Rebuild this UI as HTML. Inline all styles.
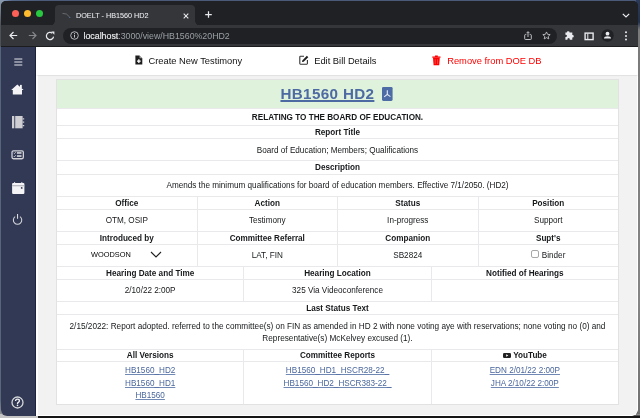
<!DOCTYPE html>
<html><head><meta charset="utf-8">
<style>
*{box-sizing:border-box;margin:0;padding:0}
html,body{width:640px;height:418px;overflow:hidden;background:#1b1b1d;font-family:"Liberation Sans",sans-serif}
#bgtop{position:absolute;left:0;top:0;width:640px;height:8px;background:linear-gradient(90deg,#9ab0cc 0,#55678a 12px,#4a5a78 40px,#4a5a78 100%)}
#bgl{position:absolute;left:0;top:0;width:4px;height:418px;background:linear-gradient(180deg,#8a9ab0 0,#50535a 24px,#4d5058 46px,#56647a 47px,#5a667a 400px,#9a9a9a 418px)}
#bgr{position:absolute;right:0;top:0;width:4px;height:418px;background:linear-gradient(180deg,#2a3a58 0,#22324e 22px,#7a7a7a 30px,#858585 300px,#707070 418px)}
#bgb{position:absolute;left:0;bottom:0;width:640px;height:4px;background:linear-gradient(180deg,#aaa 0,#555 1.5px,#151515 2.5px)}
#win{will-change:transform;position:absolute;left:1px;top:1px;width:637px;height:415px;border-radius:5px 5px 6px 6px;overflow:hidden;background:#202124}
#tabbar{position:absolute;left:0;top:0;width:637px;height:24px;background:#202124}
.dot{position:absolute;top:8.6px;width:7.1px;height:7.1px;border-radius:50%}
#tab{position:absolute;left:54px;top:4px;width:140px;height:21px;background:#35363a;border-radius:4px 4px 0 0}
#tab:before,#tab:after{content:"";position:absolute;bottom:0;width:5px;height:5px;background:radial-gradient(circle at 0 0,transparent 4.5px,#35363a 5px)}
#tab:before{left:-5px;background:radial-gradient(circle at 0 0,transparent 4.5px,#35363a 5px)}
#tab:after{right:-5px;background:radial-gradient(circle at 100% 0,transparent 4.5px,#35363a 5px)}
#tabtitle{position:absolute;left:20.6px;top:5.6px;font-size:8px;color:#eceef0;-webkit-text-stroke:0.05px #eceef0;white-space:nowrap;transform:scaleX(0.905);transform-origin:0 0}
#toolbar{position:absolute;left:0;top:24px;width:637px;height:21px;background:#35363a}
#omni{position:absolute;left:62px;top:2.8px;width:494px;height:16px;border-radius:8px;background:#202124}
#url{position:absolute;left:20.5px;top:3.2px;font-size:8.8px;color:#9aa0a6;white-space:nowrap}
#url b{font-weight:normal;color:#eceef0;-webkit-text-stroke:0.15px #eceef0}
.ic{position:absolute;overflow:visible}
#sep{position:absolute;left:0;top:45px;width:637px;height:1px;background:#1c1c1e}
#content{position:absolute;left:0;top:45.5px;width:637px;height:369.5px;background:#f2f2f2;border-right:1.4px solid #fff;border-bottom:1.5px solid #fff;border-radius:0 0 6px 0}
#side{position:absolute;left:0;top:0;width:35.2px;height:370px;background:#313954;border-right:1px solid #1c2340}
#nav{position:absolute;left:35px;top:0;width:602px;height:28.6px;background:#fff;box-shadow:0 0.6px 1.4px rgba(0,0,0,0.22)}
.navi{position:absolute;top:9px;font-size:9.33px;color:#111;white-space:nowrap}
#card{position:absolute;left:55px;top:78px;width:563px;height:326px;border:1px solid #e2e2e2;background:#fff}
.row{position:absolute;left:0;width:561px;display:flex}
.green{background:#dff3dc}
.c{flex:1;display:flex;align-items:center;justify-content:center;text-align:center;font-size:8.17px;color:#16181a;border-left:1px solid #e9e9ec;white-space:nowrap}
.c:first-child{border-left:none}
.hl{position:absolute;left:0;width:561px;height:1px;background:#e9e9ec}
.h{font-weight:bold}
a{color:#4a669c;text-decoration:underline;text-decoration-thickness:0.8px;text-decoration-color:#7088b4;text-underline-offset:1px}
.title{text-decoration-color:#4d6aa2;color:#4d6aa2;font-size:15.2px;letter-spacing:0.36px;font-weight:bold;text-decoration-thickness:1.6px;text-underline-offset:1px;position:relative;top:-0.5px}
.pdf{display:inline-block;width:10.6px;height:13.9px;margin-left:7.6px;margin-right:2px;vertical-align:-1px;position:relative;top:0.2px}
.st{white-space:normal;line-height:12.4px;font-size:8.22px;padding-top:2.3px}
.lk{flex-direction:column;justify-content:flex-start;padding-top:3.3px;line-height:12.4px}
.lk a{display:block}
.sel{display:inline-flex;align-items:center;color:#000;position:relative;top:-0.8px}
.wd{display:inline-block;font-size:8px;transform:scaleX(0.925);transform-origin:0 50%;margin-right:-3.2px}
.chev{margin-left:19px}
.cb{display:inline-block;width:8.2px;height:8.2px;border:1px solid #a8a8a8;border-radius:2px;margin-right:2.5px;position:relative;top:-1.8px}
.yt{display:inline-block;width:8px;height:5px;margin-right:2.5px;vertical-align:0.5px}
</style></head><body>
<div id="bgtop"></div><div id="bgl"></div><div id="bgr"></div><div id="bgb"></div><div style="position:absolute;left:0;bottom:0;width:38px;height:4px;background:#c4c4c4"></div>
<div id="win">
  <div id="tabbar">
    <div class="dot" style="left:11.1px;background:#fe5f57"></div>
    <div class="dot" style="left:23px;background:#febc2e"></div>
    <div class="dot" style="left:35px;background:#28c840"></div>
    <div id="tab">
      <svg class="ic" style="left:7px;top:7px" width="10" height="7" viewBox="0 0 10 7"><path d="M0.5 1.4 Q4.8 0.9 7.6 5" fill="none" stroke="#75777b" stroke-width="0.8"/><circle cx="7.8" cy="5.3" r="0.6" fill="#5a7fb8"/></svg>
      <div id="tabtitle">DOELT - HB1560 HD2</div>
      <svg class="ic" style="left:127.6px;top:8px" width="6" height="6" viewBox="0 0 6 6"><path d="M0.7 0.7 L5.3 5.3 M5.3 0.7 L0.7 5.3" stroke="#e8eaed" stroke-width="1.05"/></svg>
    </div>
    <svg class="ic" style="left:203.6px;top:10.2px" width="7" height="7" viewBox="0 0 7 7"><path d="M3.5 0.2 V6.8 M0.2 3.5 H6.8" stroke="#e8eaed" stroke-width="1.25"/></svg>
    <svg class="ic" style="left:621px;top:11.5px" width="8" height="5" viewBox="0 0 8 5"><path d="M0.8 0.8 L4 4 L7.2 0.8" fill="none" stroke="#e8eaed" stroke-width="1.2"/></svg>
  </div>
  <div id="toolbar">
    <svg class="ic" style="left:7.9px;top:6.1px" width="9" height="9" viewBox="0 0 9 9"><path d="M8.2 4.5 H1 M4.5 1 L1 4.5 L4.5 8" fill="none" stroke="#e8eaed" stroke-width="1.2"/></svg>
    <svg class="ic" style="left:26.9px;top:6.1px" width="9" height="9" viewBox="0 0 9 9"><path d="M0.8 4.5 H8 M4.5 1 L8 4.5 L4.5 8" fill="none" stroke="#85878b" stroke-width="1.2"/></svg>
    <svg class="ic" style="left:44.3px;top:6px" width="10" height="10" viewBox="0 0 10 10"><path d="M7.31 2.24 A3.6 3.6 0 1 0 8.55 5.63" fill="none" stroke="#e8eaed" stroke-width="1.25"/><path d="M6.2 0.6 L9.4 0.6 L9.4 3.8 Z" fill="#e8eaed"/></svg>
    <div id="omni">
      <svg class="ic" style="left:7px;top:3.6px" width="9" height="9" viewBox="0 0 9 9"><circle cx="4.5" cy="4.5" r="3.8" fill="none" stroke="#c4c7c9" stroke-width="0.9"/><path d="M4.5 3.8 V6.6" stroke="#c4c7c9" stroke-width="1"/><circle cx="4.5" cy="2.6" r="0.55" fill="#c4c7c9"/></svg>
      <div id="url"><b>localhost</b>:3000/view/HB1560%20HD2</div>
      <svg class="ic" style="left:460.8px;top:3.6px" width="9" height="10" viewBox="0 0 9 10"><path d="M2.3 3.6 H1.3 Q0.7 3.6 0.7 4.2 V7.8 Q0.7 8.5 1.4 8.5 H6.6 Q7.3 8.5 7.3 7.8 V4.2 Q7.3 3.6 6.7 3.6 H5.7" fill="none" stroke="#c4c7c9" stroke-width="0.95"/><path d="M4 6 V0.8 M2.5 2.2 L4 0.7 L5.5 2.2" fill="none" stroke="#c4c7c9" stroke-width="0.95"/></svg>
      <svg class="ic" style="left:479px;top:3.6px" width="9" height="9" viewBox="0 0 24 24"><path d="M12 2.5 L14.9 8.9 L21.8 9.6 L16.6 14.3 L18.1 21.1 L12 17.6 L5.9 21.1 L7.4 14.3 L2.2 9.6 L9.1 8.9 Z" fill="none" stroke="#c4c7c9" stroke-width="2.3" stroke-linejoin="round"/></svg>
    </div>
    <svg class="ic" style="left:564.2px;top:6.3px" width="10" height="9" viewBox="0 0 10 9"><path d="M3.2 0.3 Q4.7 0.3 4.6 1.6 H7.3 V4 Q8.8 3.9 8.8 5.3 Q8.8 6.6 7.3 6.5 V8.7 H4.8 Q5 7 3.6 7 Q2.2 7 2.4 8.7 H0.4 V6 Q2 6.1 2 4.9 Q2 3.7 0.4 3.8 V1.6 H1.8 Q1.7 0.3 3.2 0.3Z" fill="#e8eaed"/></svg>
    <svg class="ic" style="left:582.5px;top:6.6px" width="11" height="10" viewBox="0 0 11 10"><rect x="1.1" y="1.1" width="8" height="6.5" fill="none" stroke="#e8eaed" stroke-width="1.4"/><rect x="3.3" y="1.5" width="1" height="5.8" fill="#e8eaed"/></svg>
    <svg class="ic" style="left:599.5px;top:3.8px" width="13" height="13" viewBox="0 0 13 13"><circle cx="6.5" cy="6.5" r="6.2" fill="#202124"/><circle cx="6.5" cy="4.7" r="1.9" fill="#e8eaed"/><path d="M2.9 9.6 Q3.2 7.3 6.5 7.3 Q9.8 7.3 10.1 9.6 Z" fill="#e8eaed"/></svg>
    <svg class="ic" style="left:623.3px;top:6.2px" width="4" height="10" viewBox="0 0 4 10"><circle cx="2" cy="1.2" r="1" fill="#e8eaed"/><circle cx="2" cy="4.9" r="1" fill="#e8eaed"/><circle cx="2" cy="8.6" r="1" fill="#e8eaed"/></svg>
  </div>
  <div id="sep"></div>
  <div id="content">
    <div style="position:absolute;left:35px;top:0;width:2.2px;height:370px;background:#fff"></div>
    <div id="side">
      <svg class="ic" style="left:13px;top:11.5px" width="9" height="8" viewBox="0 0 9 8"><path d="M0.3 1 H8.3 M0.3 4 H8.3 M0.3 7 H8.3" stroke="#e6e7ec" stroke-width="1"/></svg>
      <svg class="ic" style="left:10px;top:37px" width="13" height="11" viewBox="0 0 13 11"><path d="M6.3 0.4 L12.6 6.1 L11 6.1 L11 10.6 L1.8 10.6 L1.8 6.1 L0.2 6.1 Z" fill="#f4f4f6"/><rect x="9" y="0.9" width="1.8" height="3.5" fill="#f4f4f6"/></svg>
      <svg class="ic" style="left:10.7px;top:69.2px" width="13" height="13" viewBox="0 0 13 13"><rect x="0" y="0" width="2.3" height="12.3" fill="#cfcfd3"/><rect x="3.2" y="0" width="7.4" height="12.3" fill="#cfcfd3"/><path d="M10.6 2.2 H12.2 V3.4 H10.6Z M10.6 5.6 H12.2 V6.8 H10.6Z M10.6 9 H12.2 V10.2 H10.6Z" fill="#cfcfd3"/></svg>
      <svg class="ic" style="left:10px;top:103.5px" width="14" height="10" viewBox="0 0 14 10"><rect x="1" y="0.95" width="11.35" height="7.8" rx="1.4" fill="none" stroke="#d2d2d6" stroke-width="1.3"/><path d="M2.7 3 L3.4 3.7 L4.7 2.2 M2.7 6.1 L3.4 6.8 L4.7 5.3" fill="none" stroke="#f2f2f4" stroke-width="0.75"/><rect x="5.9" y="2.1" width="4.6" height="1.7" fill="#d2d2d6"/><rect x="5.9" y="5.2" width="4.6" height="1.7" fill="#d2d2d6"/></svg>
      <svg class="ic" style="left:10.5px;top:135px" width="13" height="13" viewBox="0 0 13 13"><rect x="2.2" y="0" width="0.9" height="1.5" fill="#e8e8ec"/><rect x="9.4" y="0" width="0.9" height="1.5" fill="#e8e8ec"/><rect x="0.1" y="0.9" width="12.3" height="3" rx="1" fill="#f4f4f6"/><rect x="0.1" y="3.1" width="12.3" height="8.9" rx="1.1" fill="#f4f4f6"/><rect x="0.1" y="3.1" width="12.3" height="1.2" fill="#b5b6be"/><circle cx="9.7" cy="5.9" r="0.9" fill="#313954"/></svg>
      <svg class="ic" style="left:11px;top:166.5px" width="11" height="12" viewBox="0 0 11 12"><path d="M3.14 3.66 A4.2 4.2 0 1 0 7.96 3.66" fill="none" stroke="#d6d6da" stroke-width="1.05"/><path d="M5.55 1 V5.7" stroke="#e0e0e4" stroke-width="1.05"/></svg>
      <svg class="ic" style="left:10.3px;top:349px" width="13" height="13" viewBox="0 0 13 13"><circle cx="6.5" cy="6.5" r="5.5" fill="none" stroke="#d6d6da" stroke-width="1.3"/><path d="M4.6 5.1 Q4.6 3.1 6.5 3.1 Q8.4 3.1 8.4 4.8 Q8.4 5.8 7.3 6.4 Q6.5 6.8 6.5 8" fill="none" stroke="#eeeef2" stroke-width="1.4"/><circle cx="6.5" cy="9.4" r="0.8" fill="#eeeef2"/></svg>
    </div>
    <div id="nav">
      <svg class="ic" style="left:98.5px;top:8.8px" width="8" height="10" viewBox="0 0 8 10"><path d="M0.4 0.4 H4.5 L7.3 3.2 V9.4 H0.4 Z" fill="#1e1e1e"/><path d="M4.5 0.4 V3.2 H7.3 Z" fill="#fff" opacity="0.55"/><path d="M3.85 4.3 V8 M2 6.15 H5.7" stroke="#fff" stroke-width="1.3"/></svg>
      <svg class="ic" style="left:262.8px;top:8.3px" width="10" height="10" viewBox="0 0 10 10"><path d="M5 1.3 H1.4 Q0.8 1.3 0.8 1.9 V8.6 Q0.8 9.2 1.4 9.2 H7.8 Q8.4 9.2 8.4 8.6 V5" fill="none" stroke="#333" stroke-width="1.1"/><path d="M3 7 L3.3 5.4 L7.9 0.8 L9.3 2.2 L4.7 6.8 Z" fill="#1e1e1e"/></svg>
      <svg class="ic" style="left:395.8px;top:8.6px" width="9" height="11" viewBox="0 0 9 11"><path d="M0.3 1.6 H8.5 V2.8 H0.3Z M3 0.5 H5.8 V1.6 H3Z" fill="#ff0000"/><path d="M1 2.8 H7.8 L7.2 10.3 H1.6 Z" fill="#ff0000"/><path d="M3.2 4.2 V9 M5.6 4.2 V9" stroke="#ff8080" stroke-width="0.5"/></svg>
      <div class="navi" style="left:112.5px">Create New Testimony</div>
      <div class="navi" style="left:278.2px">Edit Bill Details</div>
      <div class="navi" style="left:411.2px;color:#ff0000">Remove from DOE DB</div>
    </div>
  </div>
  <div id="card">
<div class="row green" style="top:0px;height:28px">
<div class="c " style=""><a class="title" href="#">HB1560 HD2</a><svg class="pdf" viewBox="0 0 10.6 13.9"><rect x="0" y="0" width="10.6" height="13.9" rx="1.3" fill="#4d6ba4"/><path d="M5.3 3.2 V7.4 M5.3 7.4 L2.2 9.9 M5.3 7.4 L8.4 9.6" stroke="#e8eef8" stroke-width="1.1" fill="none"/></svg></div>
</div>
<div class="row" style="top:29px;height:16px">
<div class="c h" style="">RELATING TO THE BOARD OF EDUCATION.</div>
</div>
<div class="row" style="top:46px;height:12px">
<div class="c h" style="">Report Title</div>
</div>
<div class="row" style="top:59px;height:21px">
<div class="c " style="padding-top:1.5px">Board of Education; Members; Qualifications</div>
</div>
<div class="row" style="top:81px;height:13px">
<div class="c h" style="">Description</div>
</div>
<div class="row" style="top:95px;height:21px">
<div class="c " style="">Amends the minimum qualifications for board of education members. Effective 7/1/2050. (HD2)</div>
</div>
<div class="row" style="top:117px;height:12px">
<div class="c h" style="">Office</div>
<div class="c h" style="">Action</div>
<div class="c h" style="">Status</div>
<div class="c h" style="">Position</div>
</div>
<div class="row" style="top:130px;height:21px">
<div class="c " style="">OTM, OSIP</div>
<div class="c " style="">Testimony</div>
<div class="c " style="">In-progress</div>
<div class="c " style="">Support</div>
</div>
<div class="row" style="top:152px;height:12px">
<div class="c h" style="">Introduced by</div>
<div class="c h" style="">Committee Referral</div>
<div class="c h" style="">Companion</div>
<div class="c h" style="">Supt's</div>
</div>
<div class="row" style="top:165px;height:21px">
<div class="c " style=""><span class="sel"><span class="wd">WOODSON</span><svg class="chev" width="12" height="7" viewBox="0 0 12 7"><path d="M1 1 L6 6 L11 1" fill="none" stroke="#222" stroke-width="1.1"/></svg></span></div>
<div class="c " style="">LAT, FIN</div>
<div class="c " style="">SB2824</div>
<div class="c " style=""><span class="cb"></span>Binder</div>
</div>
<div class="row" style="top:187px;height:12px">
<div class="c h" style="">Hearing Date and Time</div>
<div class="c h" style="">Hearing Location</div>
<div class="c h" style="">Notified of Hearings</div>
</div>
<div class="row" style="top:200px;height:21px">
<div class="c " style="">2/10/22 2:00P</div>
<div class="c " style="">325 Via Videoconference</div>
<div class="c " style=""></div>
</div>
<div class="row" style="top:222px;height:12px">
<div class="c h" style="">Last Status Text</div>
</div>
<div class="row" style="top:235px;height:34px">
<div class="c st" style="">2/15/2022: Report adopted. referred to the committee(s) on FIN as amended in HD 2 with none voting aye with reservations; none voting no (0) and<br>Representative(s) McKelvey excused (1).</div>
</div>
<div class="row" style="top:270px;height:11px">
<div class="c h" style="">All Versions</div>
<div class="c h" style="">Committee Reports</div>
<div class="c h" style=""><svg class="yt" viewBox="0 0 8 5"><rect width="8" height="5" rx="1.2" fill="#222"/><path d="M3.2 1.2 L5.3 2.5 L3.2 3.8Z" fill="#fff"/></svg>YouTube</div>
</div>
<div class="row" style="top:282px;height:42px">
<div class="c lk" style=""><a href="#">HB1560_HD2</a><a href="#">HB1560_HD1</a><a href="#">HB1560</a></div>
<div class="c lk" style=""><a href="#">HB1560_HD1_HSCR28-22_</a><a href="#">HB1560_HD2_HSCR383-22_</a></div>
<div class="c lk" style=""><a href="#">EDN 2/01/22 2:00P</a><a href="#">JHA 2/10/22 2:00P</a></div>
</div>
<div class="hl" style="top:28px"></div>
<div class="hl" style="top:45px"></div>
<div class="hl" style="top:58px"></div>
<div class="hl" style="top:80px"></div>
<div class="hl" style="top:94px"></div>
<div class="hl" style="top:116px"></div>
<div class="hl" style="top:129px"></div>
<div class="hl" style="top:151px"></div>
<div class="hl" style="top:164px"></div>
<div class="hl" style="top:186px"></div>
<div class="hl" style="top:199px"></div>
<div class="hl" style="top:221px"></div>
<div class="hl" style="top:234px"></div>
<div class="hl" style="top:269px"></div>
<div class="hl" style="top:281px"></div>

  </div>
</div>
</body></html>
